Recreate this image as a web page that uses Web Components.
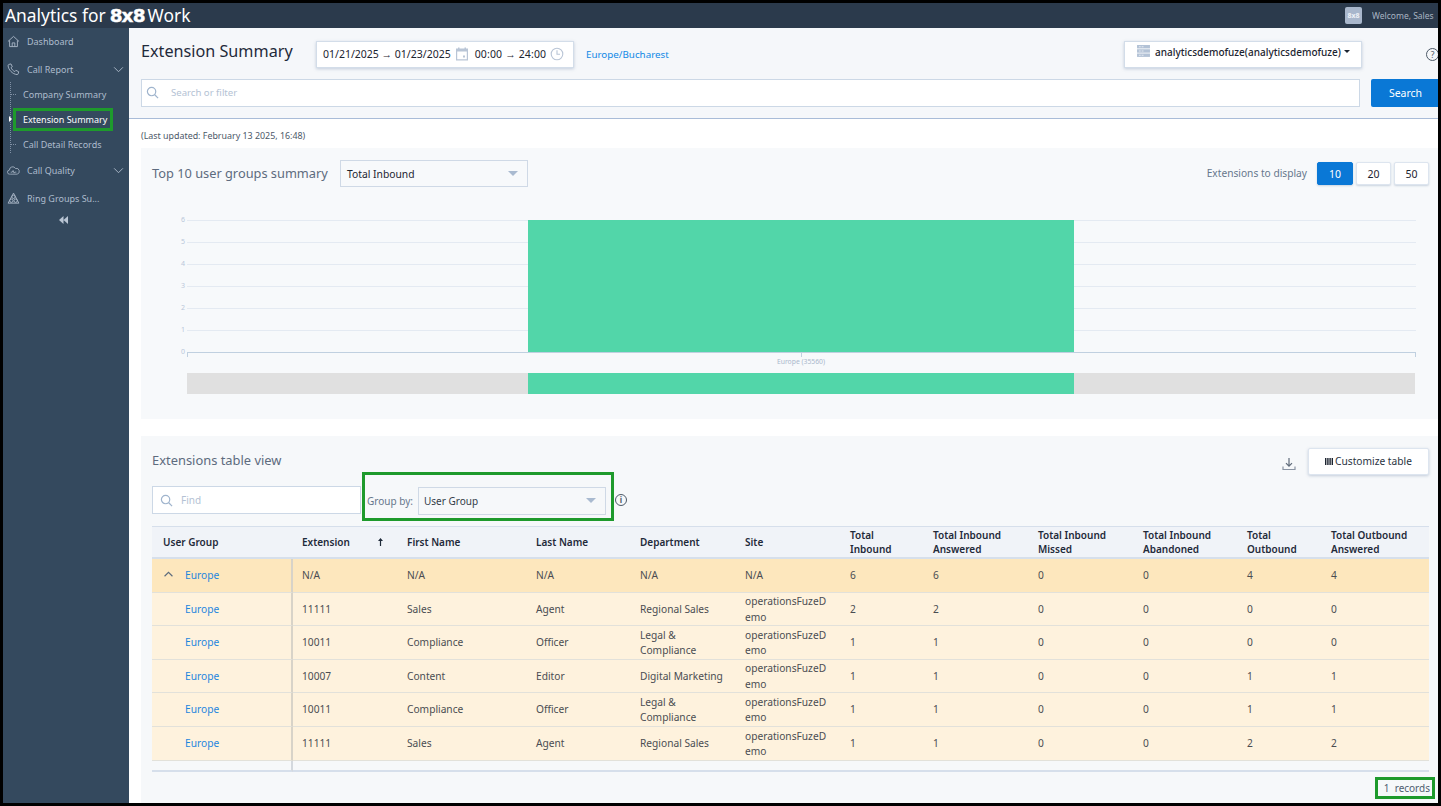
<!DOCTYPE html>
<html lang="en">
<head>
<meta charset="utf-8">
<title>Extension Summary</title>
<style>
   html, body { margin: 0; padding: 0; background: #000; }
   body { font-family: "Noto Sans", "Open Sans", sans-serif; }
</style>
</head>
<body>
<app-shell>
   <app-header slot="header"></app-header>
   <side-nav slot="nav"></side-nav>
   <page-toolbar slot="main"></page-toolbar>
   <last-updated slot="main">(Last updated: February 13 2025, 16:48)</last-updated>
   <chart-panel slot="main"></chart-panel>
   <table-panel slot="main"></table-panel>
</app-shell>

<script>
// iconos compartidos
const ICONS = {
   home: `<svg viewBox="0 0 14 14" fill="none" stroke="currentColor" stroke-width="1"><path d="M1 7 7 1.5 13 7M2.8 5.8V12.5h8.4V5.8M5.6 12.5V8.5h2.8v4"/></svg>`,
   phone: `<svg viewBox="0 0 14 14" fill="none" stroke="currentColor" stroke-width="1"><path d="M2 1.5 4.3 1l1.4 3-1.3 1c.6 1.8 2.100 3.300 4 4.200l1.200-1.300 3 1.500-.6 2.300c-.2.500-.6.800-1.200.800C6 12 1.300 7.200 1.200 2.800c0-.6.300-1.100.8-1.300z"/></svg>`,
   cloud: `<svg viewBox="0 0 16 14" fill="none" stroke="currentColor" stroke-width="1"><path d="M4 11.500H3.200A2.500 2.500 0 0 1 3 6.500 4 4 0 0 1 10.500 4.500 3.500 3.500 0 0 1 12.500 11.500H4z"/><path d="M4.500 9h2l1-2 1.200 3.200.8-1.200h2"/></svg>`,
   rings: `<svg viewBox="0 0 14 14" fill="none" stroke="currentColor" stroke-width="1"><path d="M7 1.200 12.800 12H1.200z"/><circle cx="7" cy="5.200" r="1.800"/><circle cx="4.700" cy="9.400" r="1.800"/><circle cx="9.300" cy="9.400" r="1.800"/></svg>`,
   chevron: `<svg viewBox="0 0 12 8" fill="none" stroke="currentColor" stroke-width="1.100"><path d="M1 1.500 6 6.500 11 1.500"/></svg>`,
   search: `<svg viewBox="0 0 14 14" fill="none" stroke="currentColor" stroke-width="1.300"><circle cx="6" cy="6" r="4.500"/><path d="M9.400 9.400 13 13"/></svg>`,
   calendar: `<svg viewBox="0 0 14 14"><path fill="#b9c5d6" d="M1 1.500h2V.5h1.500v1h5v-1H11v1h2v12H1zM2.200 4.500v7.800h9.600V4.500z"/><rect fill="#b9c5d6" x="8" y="8.500" width="2" height="2"/></svg>`,
   clock: `<svg viewBox="0 0 14 14" fill="none" stroke="#b9c5d6" stroke-width="1.100"><circle cx="7" cy="7" r="5.800"/><path d="M7 3.200V7.300H10"/></svg>`,
   server: `<svg viewBox="0 0 14 13"><g fill="#b3c2d6"><rect width="14" height="3.700"/><rect y="4.600" width="14" height="3.700"/><rect y="9.200" width="14" height="3.700"/></g><g fill="#e8edf3"><rect x="2" y="1.400" width="2" height="1"/><rect x="5" y="1.400" width="2" height="1"/><rect x="2" y="6" width="2" height="1"/><rect x="5" y="6" width="2" height="1"/><rect x="2" y="10.600" width="2" height="1"/><rect x="5" y="10.600" width="2" height="1"/></g></svg>`,
   download: `<svg viewBox="0 0 14 14" fill="none" stroke="#5f6b7a" stroke-width="1.200"><path d="M7 1V9M4 6.200 7 9.200 10 6.200"/><path d="M1 9.500V12.500H13V9.500" stroke="#8a94a3"/></svg>`,
   columns: `<svg viewBox="0 0 8 7" fill="#1c2430"><rect width="1.400" height="7"/><rect x="2.200" width="1.400" height="7"/><rect x="4.400" width="1.400" height="7"/><rect x="6.600" width="1.400" height="7"/></svg>`,
   sortUp: `<svg viewBox="0 0 5 8" fill="#1f2a3a"><path d="M2.500 0 5 3H3.100V8H1.900V3H0z"/></svg>`
}

const FONT = `"Noto Sans", "Open Sans", sans-serif`

class AppShell extends HTMLElement {
   constructor() {
      super()
      this.attachShadow({ mode: 'open' })
      this.shadowRoot.innerHTML = /*html*/`
         <style>
            :host{
               display:grid;
               grid-template-columns:126px 1fr;
               grid-template-rows:25px 1fr;
               box-sizing:border-box;
               width:1441px;
               height:806px;
               border:3px solid #000;
               overflow:hidden;
               background:#fff;
               font-family:${FONT};
            }
            .head{ grid-column:1 / 3; }
            .main{ display:block; min-width:0; overflow:hidden; }
         </style>
         <div class="head"><slot name="header"></slot></div>
         <slot name="nav"></slot>
         <div class="main"><slot name="main"></slot></div>
      `
   }
}

class AppHeader extends HTMLElement {
   constructor() {
      super()
      this.attachShadow({ mode: 'open' })
      this.shadowRoot.innerHTML = /*html*/`
         <style>
            :host{
               display:flex;
               align-items:center;
               box-sizing:border-box;
               height:25px;
               background:#2b3a4c;
               color:#fff;
               padding:0 0 1px 2px;
            }
            .brand{ display:flex; align-items:center; font-size:17.400px; white-space:nowrap; }
            .brand b{
               font-family:"DejaVu Sans", sans-serif; font-weight:700; font-size:18.500px;
               letter-spacing:-.9px; margin:0 3px 0 4px; -webkit-text-stroke:.4px #fff;
            }
            .right{ margin-left:auto; display:flex; align-items:center; padding-right:2px; }
            .logo{
               width:17px; height:17px; border-radius:2px; background:#a9b7cc; color:#eef1f6;
               font-size:7px; font-weight:700; display:flex; align-items:center; justify-content:center;
            }
            .welcome{ font-size:8.500px; color:#a9b4c2; margin-left:10px; width:64px; white-space:nowrap; overflow:hidden; }
         </style>
         <div class="brand"><span>Analytics for</span><b>8x8</b><span>Work</span></div>
         <div class="right">
            <div class="logo">8x8</div>
            <div class="welcome">Welcome, Sales</div>
         </div>
      `
   }
}

class NavItem extends HTMLElement {
   constructor() {
      super()
      this.attachShadow({ mode: 'open' })
   }
   connectedCallback() {
      const icon = ICONS[this.getAttribute('icon')] || ''
      const chev = this.hasAttribute('chevron') ? `<span class="chev">${ICONS.chevron}</span>` : ''
      this.shadowRoot.innerHTML = /*html*/`
         <style>
            :host{
               display:flex; align-items:center; height:28px; color:#aebccd;
               font-size:9px; white-space:nowrap; padding-left:4px;
            }
            .ico{ width:13px; height:13px; display:block; margin-right:7px; color:#a9b6c6; flex:none; }
            .ico svg, .chev svg{ display:block; width:100%; height:100%; }
            .chev{ width:11px; height:7px; margin-left:auto; margin-right:5px; color:#a9b6c6; }
         </style>
         <span class="ico">${icon}</span><slot></slot>${chev}
      `
   }
}

class SubItem extends HTMLElement {
   constructor() {
      super()
      this.attachShadow({ mode: 'open' })
   }
   connectedCallback() {
      this.shadowRoot.innerHTML = /*html*/`
         <style>
            :host{
               display:flex; align-items:center; height:25px; position:relative;
               color:#aebccd; font-size:9px; white-space:nowrap; padding-left:20px;
            }
            :host([active]){ color:#fff; }
            :host::before{
               content:""; position:absolute; left:8px; top:12px; width:5px;
               border-top:1px dotted #7f90a5;
            }
            :host([active])::before{
               border:0; left:6px; top:9px; width:0;
               border-left:3px solid #fff; border-top:3px solid transparent; border-bottom:3px solid transparent;
            }
            .mark{ display:block; line-height:13px; }
            :host([active]) .mark{ border:3px solid #1e9a2c; padding:2px 3px 2px 7px; margin-left:-10px; }
         </style>
         <span class="mark"><slot></slot></span>
      `
   }
}

class SideNav extends HTMLElement {
   constructor() {
      super()
      this.attachShadow({ mode: 'open' })
      this.shadowRoot.innerHTML = /*html*/`
         <style>
            :host{ display:block; background:#34495e; }
            .first{ margin-top:-1px; }
            .tree{ position:relative; margin:-1px 0 -1px 0; }
            .tree::before{ content:""; position:absolute; left:7px; top:0; bottom:4px; border-left:1px dotted #7f90a5; }
            .collapse{ display:flex; justify-content:center; margin-top:4px; padding-right:6px; }
            .collapse svg{ width:9px; height:8px; display:block; }
         </style>
         <nav-item class="first" icon="home">Dashboard</nav-item>
         <nav-item icon="phone" chevron>Call Report</nav-item>
         <div class="tree">
            <sub-item>Company Summary</sub-item>
            <sub-item active>Extension Summary</sub-item>
            <sub-item>Call Detail Records</sub-item>
         </div>
         <nav-item icon="cloud" chevron>Call Quality</nav-item>
         <nav-item icon="rings">Ring Groups Su...</nav-item>
         <div class="collapse"><svg viewBox="0 0 9 8" fill="#b9c5d4"><path d="M4.500 0V8L0 4zM9 0V8L4.500 4z"/></svg></div>
      `
   }
}

class PageToolbar extends HTMLElement {
   constructor() {
      super()
      this.attachShadow({ mode: 'open' })
      this.shadowRoot.innerHTML = /*html*/`
         <style>
            :host{
               display:block; box-sizing:border-box; height:91px; background:#f5f7fa;
               border-bottom:1px solid #a9bcd8; padding:13px 0 0 12px;
            }
            .top{ display:flex; align-items:center; height:26px; }
            h1{ margin:0 0 6px 0; width:175px; font-weight:400; font-size:16.200px; color:#1f2a3a; white-space:nowrap; }
            .box{
               box-sizing:border-box; height:27px; background:#fff; border:1px solid #d3dde9;
               box-shadow:0 1px 3px rgba(100,125,160,.35); display:flex; align-items:center;
               font-size:10.500px; color:#1c2430; white-space:nowrap; padding-bottom:1px;
            }
            .dates{ flex:none; width:258px; padding-left:6px; }
            .dates svg{ width:14px; height:14px; display:block; flex:none; }
            .dates .c{ margin:0 6px 0 4px; }
            .dates .t{ margin:0 0 0 4px; }
            .dates .time{ letter-spacing:.15px; }
            .dates em{ font-style:normal; font-family:"Liberation Sans", sans-serif; }
            .tz{ color:#1089e6; font-size:9.800px; margin-left:12px; }
            .acct{
               flex:none; width:238px; margin-left:auto; padding:3px 0 0 12px; align-items:flex-start;
               font-size:10px; font-weight:500;
            }
            .acct svg{ width:13px; height:12px; display:block; margin-right:5px; flex:none; }
            .caret{ display:inline-block; border:3px solid transparent; border-top:3.500px solid #1c2430; border-bottom:0; margin:5px 0 0 3px; }
            .help{
               flex:none; box-sizing:border-box; width:13px; height:13px; margin:0 -1px 0 64px;
               border:1.200px solid #4d5a68; border-radius:50%; font-size:8.500px; color:#4d5a68;
               display:flex; align-items:center; justify-content:center;
            }
            .bottom{ display:flex; margin-top:12px; }
            .search{
               box-sizing:border-box; width:1219px; height:28px; background:#fff; border:1px solid #ccd8e6;
               display:flex; align-items:center; color:#b4c2d4; font-size:9.600px; padding-bottom:1px;
            }
            .search svg{ width:13px; height:13px; margin:0 12px 0 4px; display:block; color:#9fb4cd; }
            .btn{
               box-sizing:border-box; width:67px; height:28px; margin-left:11px; background:#0a78d6; color:#fff;
               display:flex; align-items:center; justify-content:center; font-size:10.500px;
               border-radius:2px 0 0 2px; padding:0 0 1px 2px;
            }
         </style>
         <div class="top">
            <h1>Extension Summary</h1>
            <div class="box dates">
               <span>01/21/2025 <em>→</em> 01/23/2025</span><span class="c">${ICONS.calendar}</span><span class="time">00:00 <em>→</em> 24:00</span><span class="t">${ICONS.clock}</span>
            </div>
            <div class="tz">Europe/Bucharest</div>
            <div class="box acct">${ICONS.server}<span>analyticsdemofuze(analyticsdemofuze)</span><span class="caret"></span></div>
            <div class="help">?</div>
         </div>
         <div class="bottom">
            <div class="search">${ICONS.search}<span>Search or filter</span></div>
            <div class="btn">Search</div>
         </div>
      `
   }
}

class LastUpdated extends HTMLElement {
   constructor() {
      super()
      this.attachShadow({ mode: 'open' })
      this.shadowRoot.innerHTML = /*html*/`
         <style>
            :host{
               display:flex; align-items:center; box-sizing:border-box; height:29px; padding:4px 0 0 12px;
               font-size:8.900px; color:#4c5868; background:#fff;
            }
         </style>
         <slot></slot>
      `
   }
}

class ChartPanel extends HTMLElement {
   constructor() {
      super()
      this.attachShadow({ mode: 'open' })
   }
   connectedCallback() {
      // lineas y etiquetas del eje y
      let grid = ''
      for (let i = 0; i <= 6; i++) {
         const y = 152 - i * 22
         grid += `<text x="33" y="${y + 2}" text-anchor="end" font-size="7" fill="#b9c7da">${i}</text>`
         grid += `<line x1="35" x2="1264" y1="${y + .5}" y2="${y + .5}" stroke="${i ? '#e4eaf2' : '#c0d0e0'}"/>`
      }
      this.shadowRoot.innerHTML = /*html*/`
         <style>
            :host{ display:block; box-sizing:border-box; margin:0 0 17px 12px; height:271px; background:#f7f9fb; padding:12px 9px 0 11px; }
            .head{ display:flex; align-items:center; height:27px; }
            h2{ margin:0 0 2px 0; width:188px; font-weight:400; font-size:12.800px; color:#5d6b7e; white-space:nowrap; }
            .sel{
               box-sizing:border-box; width:188px; height:27px; background:#f7f9fb; border:1px solid #cfd9e6;
               display:flex; align-items:center; justify-content:space-between; padding:0 9px 0 6px;
               font-size:10.300px; color:#1c2430;
            }
            .sel i{ border:5px solid transparent; border-top:5px solid #a9bad0; border-bottom:0; }
            .lbl{ margin:0 0 2px auto; font-size:10.200px; color:#66778c; }
            .num{
               box-sizing:border-box; width:35px; height:23px; margin-left:3px; background:#fff; border:1px solid #dde5ef;
               box-shadow:0 1px 2px rgba(100,125,160,.3); border-radius:2px; display:flex; align-items:center; justify-content:center;
               font-size:10.500px; color:#1c2430;
            }
            .num.on{ width:36px; background:#0a78d6; border-color:#0a78d6; color:#fff; margin-left:10px; }
            svg{ display:block; margin-top:13px; font-family:${FONT}; }
         </style>
         <div class="head">
            <h2>Top 10 user groups summary</h2>
            <div class="sel"><span>Total Inbound</span><i></i></div>
            <span class="lbl">Extensions to display</span>
            <div class="num on">10</div>
            <div class="num">20</div>
            <div class="num">50</div>
         </div>
         <svg width="1277" height="200" viewBox="0 0 1277 200">
            ${grid}
            <line x1="35.500" x2="35.500" y1="152" y2="157" stroke="#c0d0e0"/>
            <line x1="649.500" x2="649.500" y1="152" y2="157" stroke="#c0d0e0"/>
            <line x1="1263.500" x2="1263.500" y1="152" y2="157" stroke="#c0d0e0"/>
            <rect x="376" y="20" width="546" height="132" fill="#52d6a9"/>
            <text x="649" y="163.500" text-anchor="middle" font-size="6.800" fill="#a9b8cc">Europe (35560)</text>
            <rect x="35" y="173" width="1228" height="21" fill="#e0e0e0"/>
            <rect x="376" y="173" width="546" height="21" fill="#52d6a9"/>
         </svg>
      `
   }
}

const COLUMNS = [
   ['User Group', 141], ['Extension', 103], ['First Name', 129], ['Last Name', 104], ['Department', 105], ['Site', 105],
   ['Total<br>Inbound', 83], ['Total Inbound<br>Answered', 105], ['Total Inbound<br>Missed', 105],
   ['Total Inbound<br>Abandoned', 104], ['Total<br>Outbound', 84], ['Total Outbound<br>Answered', 109]
]

const SITE = 'operationsFuzeD<br>emo'
const LEGAL = 'Legal &amp;<br>Compliance'
const ROWS = [
   ['N/A', 'N/A', 'N/A', 'N/A', 'N/A', 6, 6, 0, 0, 4, 4],
   ['11111', 'Sales', 'Agent', 'Regional Sales', SITE, 2, 2, 0, 0, 0, 0],
   ['10011', 'Compliance', 'Officer', LEGAL, SITE, 1, 1, 0, 0, 0, 0],
   ['10007', 'Content', 'Editor', 'Digital Marketing', SITE, 1, 1, 0, 0, 1, 1],
   ['10011', 'Compliance', 'Officer', LEGAL, SITE, 1, 1, 0, 0, 1, 1],
   ['11111', 'Sales', 'Agent', 'Regional Sales', SITE, 1, 1, 0, 0, 2, 2]
]
const ROW_H = [34, 33, 34, 33, 34, 34]

class ExtTable extends HTMLElement {
   constructor() {
      super()
      this.attachShadow({ mode: 'open' })
   }
   connectedCallback() {
      const cols = COLUMNS.map(c => `<col style="width:${c[1]}px">`).join('')
      const head = COLUMNS.map((c, i) => `<th>${c[0]}${i === 1 ? `<span class="arrow">${ICONS.sortUp}</span>` : ''}</th>`).join('')
      const body = ROWS.map((r, i) => /*html*/`
         <tr class="${i === 0 ? 'group' : ''}" style="height:${ROW_H[i]}px">
            <td class="first">${i === 0 ? `<svg class="up" viewBox="0 0 8 5" fill="none" stroke="#5b6b7d"><path d="M.5 4.500 4 1l3.500 3.500"/></svg>` : ''}<a>Europe</a></td>
            ${r.map(v => `<td>${v}</td>`).join('')}
         </tr>`).join('')
      this.shadowRoot.innerHTML = /*html*/`
         <style>
            :host{ display:block; font-size:10.200px; }
            table{ border-collapse:separate; border-spacing:0; table-layout:fixed; width:1277px; }
            th{
               height:30px; padding:0 0 0 11px; text-align:left; font-weight:600; line-height:14.500px; font-size:10px;
               color:#1f2a3a; background:#f0f3f8; border-top:1px solid #d6dfeb; border-bottom:2px solid #d6dfeb;
               position:relative; white-space:nowrap;
            }
            .arrow{ position:absolute; left:85px; top:11px; width:5px; height:8px; }
            .arrow svg{ display:block; width:5px; height:8px; }
            td{
               box-sizing:border-box; padding:1px 0 0 11px; background:#fef2dd; color:#4a4d52; line-height:15.500px;
               border-bottom:1px solid #e2e1da; white-space:nowrap; font-size:10.200px;
            }
            .group td{ background:#fde7bd; padding-top:0; }
            td.first{ padding-left:33px; position:relative; border-right:2px solid #d8d3c8; }
            th:nth-child(2), td:nth-child(2){ padding-left:9px; }
            td.first a{ color:#1f86dd; }
            .up{ position:absolute; left:12px; top:12px; width:9px; height:6px; }
            .blank td{ height:11px; padding:0; background:#f6f8fa; border-bottom:2px solid #d6dfeb; }
            .blank td.first{ border-right:2px solid #d3d8de; }
         </style>
         <table>
            <colgroup>${cols}</colgroup>
            <thead><tr>${head}</tr></thead>
            <tbody>${body}
               <tr class="blank"><td class="first"></td><td colspan="11"></td></tr>
            </tbody>
         </table>
      `
   }
}

class TablePanel extends HTMLElement {
   constructor() {
      super()
      this.attachShadow({ mode: 'open' })
      this.shadowRoot.innerHTML = /*html*/`
         <style>
            :host{ display:block; box-sizing:border-box; margin-left:12px; height:367px; background:#f6f8fa; padding:14px 9px 0 11px; }
            .head{ display:flex; align-items:center; height:22px; }
            h2{ margin:0 0 2px 0; font-weight:400; font-size:12.900px; color:#5d6b7e; }
            .dl{ width:14px; height:14px; margin-left:auto; margin-right:12px; display:block; }
            .custom{
               box-sizing:border-box; width:121px; height:27px; background:#fff; border:1px solid #dde5ef; border-radius:2px;
               box-shadow:0 1px 3px rgba(100,125,160,.35); display:flex; align-items:center; justify-content:center;
               font-size:10.200px; color:#2a3342;
            }
            .custom svg{ display:block; width:8px; height:7px; margin-right:2px; }
            .tools{ display:flex; align-items:flex-start; height:50px; }
            .find{
               box-sizing:border-box; width:209px; height:28px; margin-top:14px; background:#fff; border:1px solid #ccd8e6;
               display:flex; align-items:center; color:#b4c2d4; font-size:10px;
            }
            .find svg{ width:13px; height:13px; margin:0 8px 0 7px; color:#9fb4cd; display:block; }
            .group{
               box-sizing:border-box; width:252px; height:49px; margin-left:1px; border:3px solid #1e9a2c;
               display:flex; align-items:center; padding:8px 0 0 2px; font-size:10px; color:#66778c; white-space:nowrap;
            }
            .sel{
               box-sizing:border-box; width:188px; height:28px; margin-left:auto; margin-right:5px; border:1px solid #cfd9e6;
               display:flex; align-items:center; justify-content:space-between; padding:0 9px 0 5px; color:#333c49; background:#f6f8fa;
            }
            .sel i{ border:5px solid transparent; border-top:5px solid #a9bad0; border-bottom:0; }
            .info{ box-sizing:border-box; width:12px; height:12px; margin:22px 0 0 1px; border:1.200px solid #4d5a68; border-radius:50%; color:#4d5a68; font-size:8px; font-weight:700; display:flex; align-items:center; justify-content:center; line-height:1; }
            ext-table{ margin-top:4px; }
            .foot{ display:flex; justify-content:flex-end; margin:5px -6px 0 0; }
            .rec{ box-sizing:border-box; width:60px; height:22px; border:3px solid #1e9a2c; display:flex; align-items:center; justify-content:flex-end; padding-right:2px; font-size:10px; color:#4f5d70; white-space:pre; }
         </style>
         <div class="head">
            <h2>Extensions table view</h2>
            <span class="dl">${ICONS.download}</span>
            <div class="custom">${ICONS.columns}Customize table</div>
         </div>
         <div class="tools">
            <div class="find">${ICONS.search}<span>Find</span></div>
            <div class="group">Group by:<div class="sel"><span>User Group</span><i></i></div></div>
            <div class="info">i</div>
         </div>
         <ext-table></ext-table>
         <div class="foot"><div class="rec">1  records</div></div>
      `
   }
}

customElements.define("nav-item", NavItem)
customElements.define("sub-item", SubItem)
customElements.define("app-header", AppHeader)
customElements.define("side-nav", SideNav)
customElements.define("page-toolbar", PageToolbar)
customElements.define("last-updated", LastUpdated)
customElements.define("chart-panel", ChartPanel)
customElements.define("ext-table", ExtTable)
customElements.define("table-panel", TablePanel)
customElements.define("app-shell", AppShell)
</script>
</body>
</html>
